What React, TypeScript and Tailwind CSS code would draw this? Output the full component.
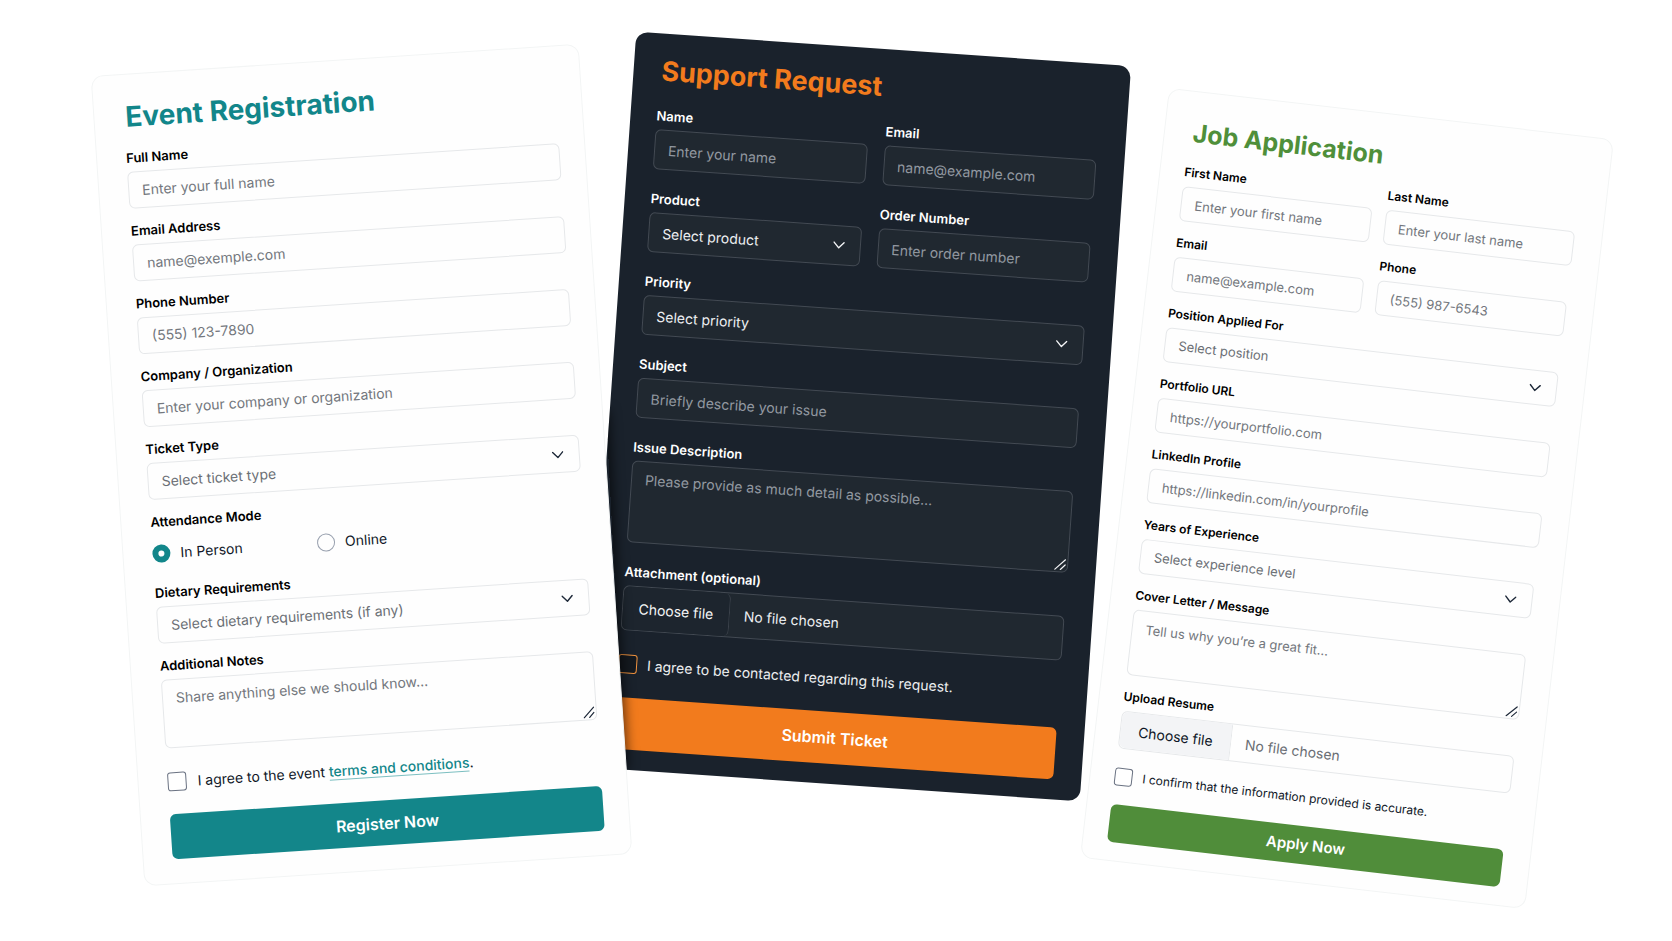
import { useId } from "react";
import type { ReactNode } from "react";

type Theme = {
  group: string;
  label: string;
  control: string;
  height: string;
  inputText: string;
  selectText: string;
  icon: string;
};

const eventTheme: Theme = {
  group: "mb-3",
  label: "text-[13px] text-black",
  control: "border-[#e6e8ea] bg-[#fefefe] px-[13px] text-[14px]",
  height: "h-[37px]",
  inputText: "text-gray-900 placeholder:text-[#73777d]",
  selectText: "text-[#6b6f75]",
  icon: "text-gray-800",
};

const supportTheme: Theme = {
  group: "mb-[19px]",
  label: "text-[13px] text-white",
  control: "border-[#434a53] bg-[#202830] px-[13px] text-[14px]",
  height: "h-[40px]",
  inputText: "text-gray-50 placeholder:text-[#9298a0]",
  selectText: "text-[#eceef0]",
  icon: "text-gray-100",
};

const jobTheme: Theme = {
  group: "mb-3",
  label: "text-[12px] text-black",
  control: "border-[#e6e8ea] bg-[#fefefe] px-[13px] text-[13px]",
  height: "h-[35px]",
  inputText: "text-gray-900 placeholder:text-[#73777d]",
  selectText: "text-[#6b6f75]",
  icon: "text-gray-800",
};

function Field({ theme, label, id, children }: { theme: Theme; label: string; id: string; children: ReactNode }) {
  return (
    <div className={theme.group}>
      <label htmlFor={id} className={`mb-1 block leading-5 font-semibold ${theme.label}`}>
        {label}
      </label>
      {children}
    </div>
  );
}

function TextField({ theme, label, placeholder, type = "text" }: { theme: Theme; label: string; placeholder: string; type?: string }) {
  const id = useId();
  return (
    <Field theme={theme} label={label} id={id}>
      <input
        id={id}
        type={type}
        placeholder={placeholder}
        className={`block w-full rounded-md border outline-none ${theme.control} ${theme.height} ${theme.inputText}`}
      />
    </Field>
  );
}

function SelectField({ theme, label, option }: { theme: Theme; label: string; option: string }) {
  const id = useId();
  return (
    <Field theme={theme} label={label} id={id}>
      <div className="relative">
        <select
          id={id}
          className={`block w-full appearance-none rounded-md border outline-none ${theme.control} ${theme.height} ${theme.selectText}`}
        >
          <option>{option}</option>
        </select>
        <svg
          viewBox="0 0 12 8"
          className={`pointer-events-none absolute top-1/2 right-4 h-2 w-3 -translate-y-1/2 ${theme.icon}`}
          fill="none"
          stroke="currentColor"
          strokeWidth="1.4"
          strokeLinecap="round"
          strokeLinejoin="round"
        >
          <path d="M1 1.2 6 6.6 11 1.2" />
        </svg>
      </div>
    </Field>
  );
}

function TextareaField({ theme, label, placeholder, height }: { theme: Theme; label: string; placeholder: string; height: string }) {
  const id = useId();
  return (
    <Field theme={theme} label={label} id={id}>
      <div className="relative">
        <textarea
          id={id}
          placeholder={placeholder}
          className={`block w-full resize-none rounded-md border py-2 leading-5 outline-none ${theme.control} ${height} ${theme.inputText}`}
        />
        <svg
          viewBox="0 0 12 12"
          className={`pointer-events-none absolute right-[2px] bottom-[2px] size-3 ${theme.icon}`}
          fill="none"
          stroke="currentColor"
          strokeWidth="1.2"
          strokeLinecap="round"
        >
          <path d="M1 11 11 1M6.5 11 11 6.2" />
        </svg>
      </div>
    </Field>
  );
}

function FileField({ theme, label, box, button, text }: { theme: Theme; label: string; box: string; button: string; text: string }) {
  const id = useId();
  return (
    <div>
      <label htmlFor={id} className={`mb-1 block leading-5 font-semibold ${theme.label}`}>
        {label}
      </label>
      <label className={`relative flex items-stretch rounded-md border ${box}`}>
        <input id={id} type="file" className="sr-only" />
        <span className={`flex items-center justify-center ${button}`}>Choose file</span>
        <span className={`flex items-center pl-[14px] ${text}`}>No file chosen</span>
      </label>
    </div>
  );
}

function EventRegistration() {
  return (
    <form className="relative z-10 mt-[59px] -rotate-[3.8deg] rounded-xl border border-[#f3f5f5] bg-[#fefefe] pt-[22px] pr-[25px] pb-6 pl-[29px]">
      <h1 className="mb-[11px] pl-[2px] text-[28px] leading-10 font-bold text-[#12868a]">Event Registration</h1>
      <TextField theme={eventTheme} label="Full Name" placeholder="Enter your full name" />
      <TextField theme={eventTheme} label="Email Address" placeholder="name@exemple.com" type="email" />
      <TextField theme={eventTheme} label="Phone Number" placeholder="(555) 123-7890" type="tel" />
      <TextField theme={eventTheme} label="Company / Organization" placeholder="Enter your company or organization" />
      <SelectField theme={eventTheme} label="Ticket Type" option="Select ticket type" />

      <fieldset className="mb-3">
        <legend className="mb-1 text-[13px] leading-5 font-semibold text-black">Attendance Mode</legend>
        <div className="grid h-[35px] grid-cols-[165px_1fr] items-center text-[14px] text-gray-900">
          <label className="flex items-center gap-[10px]">
            <input
              type="radio"
              name="mode"
              defaultChecked
              className="size-[18px] appearance-none rounded-full border border-gray-400 checked:border-[6px] checked:border-[#12868a]"
            />
            In Person
          </label>
          <label className="flex items-center gap-[10px]">
            <input
              type="radio"
              name="mode"
              className="size-[18px] appearance-none rounded-full border border-gray-400 checked:border-[6px] checked:border-[#12868a]"
            />
            Online
          </label>
        </div>
      </fieldset>

      <SelectField theme={eventTheme} label="Dietary Requirements" option="Select dietary requirements (if any)" />
      <TextareaField theme={eventTheme} label="Additional Notes" placeholder="Share anything else we should know..." height="h-[69px]" />

      <div className="mb-3 flex h-[42px] items-center gap-[11px] text-[14px] text-gray-900">
        <input id="event-terms" type="checkbox" className="size-[19px] appearance-none rounded-[3px] border border-gray-500 bg-white" />
        <label htmlFor="event-terms">
          I agree to the event{" "}
          <a href="#terms" className="border-b border-[#7cbfc1] font-medium text-[#12868a]">
            terms and conditions
          </a>
          .
        </label>
      </div>
      <button type="submit" className="h-[45px] w-full rounded-md bg-[#13868a] text-[16px] font-semibold text-white">
        Register Now
      </button>
    </form>
  );
}

function SupportRequest() {
  return (
    <form className="relative mt-[48px] rotate-[4deg] overflow-hidden rounded-xl bg-[#1a222c] pt-[18px] pr-[28px] pb-5 pl-[26px]">
      <h1 className="mb-[14px] pl-[2px] text-[27px] leading-10 font-bold text-[#f27b1d]">Support Request</h1>
      <div className="grid grid-cols-2 gap-x-[17px]">
        <TextField theme={supportTheme} label="Name" placeholder="Enter your name" />
        <TextField theme={supportTheme} label="Email" placeholder="name@example.com" type="email" />
        <SelectField theme={supportTheme} label="Product" option="Select product" />
        <TextField theme={supportTheme} label="Order Number" placeholder="Enter order number" />
      </div>
      <SelectField theme={supportTheme} label="Priority" option="Select priority" />
      <TextField theme={supportTheme} label="Subject" placeholder="Briefly describe your issue" />
      <TextareaField theme={supportTheme} label="Issue Description" placeholder="Please provide as much detail as possible..." height="h-[82px]" />
      <FileField
        theme={supportTheme}
        label="Attachment (optional)"
        box="h-[45px] border-[#434a53] bg-[#202830]"
        button="w-[107px] rounded-md border-r border-[#3b424b] bg-[#1d252e] text-[14px] text-[#f3f4f5]"
        text="text-[14px] text-[#eceef0]"
      />

      <div className="my-3 flex h-[43px] items-center gap-[10px] text-[14px] text-[#eceef0]">
        <input id="contact" type="checkbox" className="size-[19px] appearance-none rounded-[3px] border border-[#f0933f] bg-[#14191f]" />
        <label htmlFor="contact">I agree to be contacted regarding this request.</label>
      </div>
      <button type="submit" className="h-[52px] w-full rounded-md bg-[#f27b1d] text-[16px] font-semibold text-white">
        Submit Ticket
      </button>

      {/* shade cast by the card in front */}
      <div className="pointer-events-none absolute bottom-0 left-0 h-[360px] w-10 origin-bottom-right -rotate-[7deg] shadow-[3px_0_12px_rgba(0,0,0,0.6)]" />
    </form>
  );
}

function JobApplication() {
  return (
    <form className="relative mt-[111px] ml-[12px] rotate-[6.6deg] rounded-xl border border-[#f3f5f5] bg-[#fefefe] pt-[23px] pr-[27px] pb-[18px] pl-6">
      <h1 className="mb-[12px] pl-1 text-[25px] leading-9 font-bold text-[#4f8f3a]">Job Application</h1>
      <div className="grid grid-cols-2 gap-x-[14px]">
        <TextField theme={jobTheme} label="First Name" placeholder="Enter your first name" />
        <TextField theme={jobTheme} label="Last Name" placeholder="Enter your last name" />
        <TextField theme={jobTheme} label="Email" placeholder="name@example.com" type="email" />
        <TextField theme={jobTheme} label="Phone" placeholder="(555) 987-6543" type="tel" />
      </div>
      <SelectField theme={jobTheme} label="Position Applied For" option="Select position" />
      <TextField theme={jobTheme} label="Portfolio URL" placeholder="https://yourportfolio.com" type="url" />
      <TextField theme={jobTheme} label="LinkedIn Profile" placeholder="https://linkedin.com/in/yourprofile" type="url" />
      <SelectField theme={jobTheme} label="Years of Experience" option="Select experience level" />
      <TextareaField theme={jobTheme} label="Cover Letter / Message" placeholder="Tell us why you’re a great fit..." height="h-[66px]" />
      <FileField
        theme={jobTheme}
        label="Upload Resume"
        box="h-[38px] border-[#e6e8ea] bg-[#fefefe]"
        button="w-[111px] rounded-l-md border-r border-[#e6e8ea] bg-[#f3f4f6] text-[14px] text-gray-900"
        text="text-[14px] text-[#6b6f75]"
      />

      <div className="my-[10px] flex h-[36px] items-center gap-[10px] text-[12px] text-gray-900">
        <input id="accurate" type="checkbox" className="size-[18px] appearance-none rounded-[3px] border border-gray-500 bg-white" />
        <label htmlFor="accurate">I confirm that the information provided is accurate.</label>
      </div>
      <button type="submit" className="h-[38px] w-full rounded-md bg-[#508d3a] text-[15px] font-semibold text-white">
        Apply Now
      </button>
    </form>
  );
}

export default function App() {
  return (
    <main className="min-h-screen overflow-hidden bg-white pr-[101px] pl-[117px] font-['Inter',sans-serif]">
      <div className="grid grid-cols-[489fr_496fr_460fr] items-start gap-x-1">
        <EventRegistration />
        <SupportRequest />
        <JobApplication />
      </div>
    </main>
  );
}
